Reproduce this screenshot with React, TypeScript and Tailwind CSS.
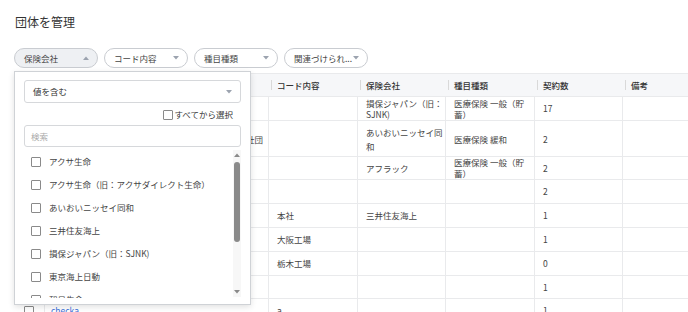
import React from 'react';

const cols = [30, 224, 89, 88, 89, 88, 88];

const Caret = ({ up = false }: { up?: boolean }) => (
  <svg width="6" height="4" viewBox="0 0 6 4" className="shrink-0">
    {up ? <path d="M0 4 L3 0.5 L6 4 Z" fill="#9ca3af" /> : <path d="M0 0 L3 3.5 L6 0 Z" fill="#9ca3af" />}
  </svg>
);

const Box = () => <span className="inline-block w-[10px] h-[10px] border border-[#8a8a8a] rounded-[1px] bg-white shrink-0" />;

const Pill = ({ label, active = false }: { label: string; active?: boolean }) => (
  <div
    className={`w-[84px] h-[20px] rounded-full border border-[#c9ccd1] flex items-center justify-between pl-[9px] pr-[8px] text-[8.5px] text-[#444] ${
      active ? 'bg-[#eef0f3]' : 'bg-white'
    }`}
  >
    <span className="whitespace-nowrap">{label}</span>
    <Caret up={active} />
  </div>
);

type Row = { h: number; cells: React.ReactNode[]; endName?: boolean };

const rows: Row[] = [
  { h: 24, cells: ['', '', '', <>損保ジャパン（旧：<br />SJNK)</>, <>医療保険 一般（貯<br />蓄）</>, '17', ''] },
  { h: 36, endName: true, cells: ['', '株式会社テスト健康保険組合連合会医療法人社団', '', <>あいおいニッセイ同<br />和</>, '医療保険 緩和', '2', ''] },
  { h: 23, cells: ['', '', '', 'アフラック', <>医療保険 一般（貯<br />蓄）</>, '2', ''] },
  { h: 24, cells: ['', '', '', '', '', '2', ''] },
  { h: 24, cells: ['', '', '本社', '三井住友海上', '', '1', ''] },
  { h: 24, cells: ['', '', '大阪工場', '', '', '1', ''] },
  { h: 24, cells: ['', '', '栃木工場', '', '', '0', ''] },
  { h: 23, cells: ['', '', '', '', '', '1', ''] },
  { h: 24, cells: ['', <span className="text-[#3b6fd8]">checka</span>, 'a', '', '', '1', ''] },
];

const headers = ['', '', 'コード内容', '保険会社', '種目種類', '契約数', '備考'];

const options = [
  'アクサ生命',
  'アクサ生命（旧：アクサダイレクト生命）',
  'あいおいニッセイ同和',
  '三井住友海上',
  '損保ジャパン（旧：SJNK)',
  '東京海上日動',
  '朝日生命',
];

export default function App() {
  return (
    <div className="relative w-[688px] h-[312px] overflow-hidden bg-white font-['Noto_Sans_CJK_JP',sans-serif] text-[#333]">
      <div className="pl-[15px] pt-[14px] text-[12px] leading-[16px] text-[#333]">団体を管理</div>

      <div className="flex gap-[6px] pl-[14px] mt-[18px]">
        <Pill label="保険会社" active />
        <Pill label="コード内容" />
        <Pill label="種目種類" />
        <Pill label="関連づけられ..." />
      </div>

      {/* Table */}
      <div className="mt-[5px] ml-[14px] w-[704px] text-[8.5px] text-[#444]">
        <div className="flex h-[24px] bg-[#f6f7f9] border-y border-[#e9eaec]">
          {headers.map((h, i) => (
            <div key={i} style={{ width: cols[i] }} className="flex items-center shrink-0">
              {i > 1 && <span className="ml-[3px] w-px h-[10px] bg-[#d9d9d9]" />}
              <span className="pl-[5px] font-medium text-[#333] whitespace-nowrap">{h}</span>
            </div>
          ))}
        </div>
        {rows.map((r, ri) => (
          <div key={ri} style={{ height: r.h }} className="flex border-b border-[#e9eaec]">
            {r.cells.map((c, ci) => (
              <div
                key={ci}
                style={{ width: cols[ci] }}
                className={`flex items-center shrink-0 whitespace-nowrap ${
                  ci === 0
                    ? 'justify-center'
                    : ci === 1
                    ? `border-l border-[#e9eaec] overflow-hidden ${r.endName ? 'justify-end pr-[5px]' : 'pl-[6px]'}`
                    : 'border-l border-[#e9eaec] pl-[8px]'
                } ${ri === 1 ? 'leading-[14px]' : 'leading-[11px]'}`}
              >
                {ci === 0 ? <Box /> : <span>{c}</span>}
              </div>
            ))}
          </div>
        ))}
      </div>

      {/* Dropdown */}
      <div className="absolute left-[14px] top-[71px] w-[237px] h-[234px] bg-white border border-[#cfd2d6] shadow-[0_2px_6px_rgba(0,0,0,0.12)] px-[9px] pt-[8px]">
        <div className="h-[23px] border border-[#d6d8db] rounded-[3px] flex items-center justify-between pl-[8px] pr-[8px] text-[8.5px] text-[#333]">
          <span>値を含む</span>
          <Caret />
        </div>
        <div className="flex justify-end items-center gap-[1px] pr-[8px] mt-[5px] h-[13px] text-[8.5px] text-[#333]">
          <Box />
          <span>すべてから選択</span>
        </div>
        <div className="mt-[4px] h-[22px] border border-[#d6d8db] rounded-[3px] flex items-center pl-[6px] text-[8.5px] text-[#aaa]">
          検索
        </div>
        <div className="relative mt-[3px] h-[148px] overflow-hidden">
          <div className="pr-[12px]">
            {options.map((o) => (
              <div key={o} className="h-[23px] flex items-center gap-[8px] pl-[7px] text-[8.5px] text-[#444] whitespace-nowrap">
                <Box />
                <span>{o}</span>
              </div>
            ))}
          </div>
          <div className="absolute right-0 top-0 w-[8px] h-[147px] bg-[#f7f7f7] flex flex-col items-center">
            <svg width="6" height="4" viewBox="0 0 6 4" className="mt-[3px]">
              <path d="M0 4 L3 0.5 L6 4 Z" fill="#8a8a8a" />
            </svg>
            <div className="mt-[5px] w-[6px] h-[80px] rounded-full bg-[#8a8a8a]" />
            <div className="flex-1" />
            <svg width="6" height="4" viewBox="0 0 6 4" className="mb-[3px]">
              <path d="M0 0 L3 3.5 L6 0 Z" fill="#8a8a8a" />
            </svg>
          </div>
        </div>
      </div>
    </div>
  );
}
